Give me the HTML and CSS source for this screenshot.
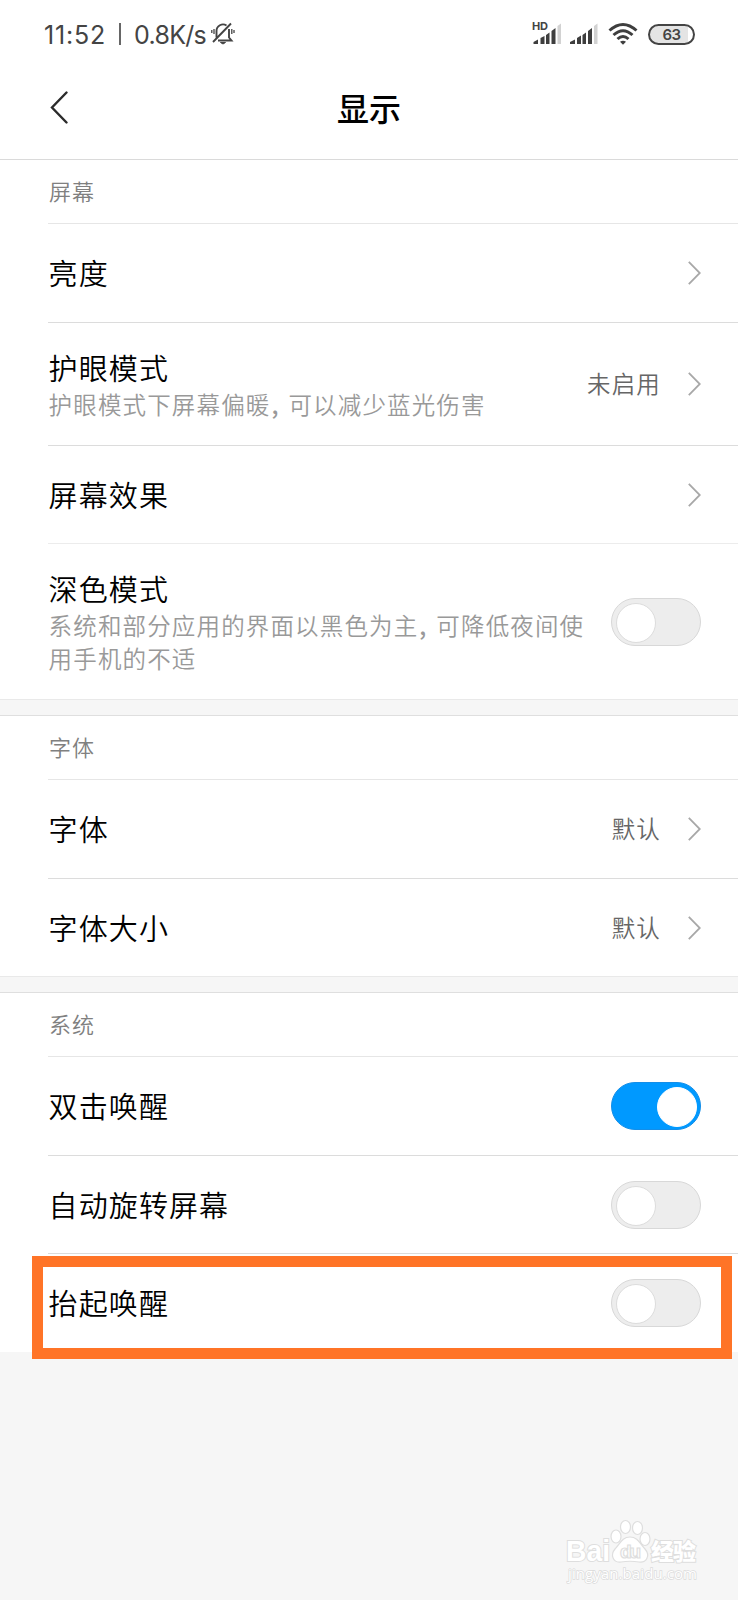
FILE: index.html
```html
<!DOCTYPE html>
<html lang="zh-CN">
<head>
<meta charset="utf-8">
<title>显示</title>
<link rel="stylesheet" href="styles.css">
</head>
<body>
<div class="screen">
  <div class="status">
    <span class="clock">11:52</span><span class="sep"></span><span class="speed">0.8K/s</span>
    <svg class="bell" width="24" height="24" viewBox="0 0 24 24" fill="none" stroke="#444" stroke-width="1.9">
      <path d="M5.500 15.500V9a6.500 6.500 0 0 1 10-5.500M18 7v8.500l2.500 3H7M20 1.500L2 20"/>
      <path d="M9.500 20.500h5l-2.500 1.500z" fill="#444" stroke-width="1"/>
      <path d="M3 7v5M.8 8v3M20.800 7v5M23 8v3" stroke-width="1.300"/>
    </svg>
    <div class="indicators">
      <svg class="signal-hd" width="30" height="28" viewBox="0 -4 30 28">
        <text class="hd" x="0" y="8" textLength="16">HD</text>
        <g fill="#3e3e3e"><path d="M1.500 22v-2l4.500-2.500V22zM8.500 22v-6l4-2v8zM14 22v-9l3.500-2.500V22zM19.500 22V9l4-3v16z"/></g>
        <path d="M25.500 22V4l3.500-2.500V22z" fill="#d2d2d2"/>
      </svg>
      <svg class="signal" width="28" height="24" viewBox="0 0 28 24">
        <g fill="#3e3e3e"><path d="M0 22v-2l5-2.500V22zM7 22v-6l4-2.500V22zM12.500 22v-9l3.500-2.500V22zM18 22V9l4-3v16z"/></g>
        <path d="M24 22V4l3.500-2.500V22z" fill="#d2d2d2"/>
      </svg>
      <svg class="wifi" width="30" height="24" viewBox="0 0 30 24" fill="none" stroke="#3e3e3e" stroke-width="3">
        <path d="M1.500 8.500q13.500-12 27 0M5.500 13q9.500-8.500 19 0M9.500 17q5.500-5 11 0"/>
        <path d="M12 19.800q3-2.300 6 0l-3 3z" fill="#3e3e3e" stroke="none"/>
      </svg>
      <span class="battery">63</span>
    </div>
  </div>
  <header class="header">
    <svg width="18" height="34" viewBox="0 0 18 34" fill="none" stroke="#2b2b2b" stroke-width="2.400" stroke-linecap="round"><path d="M16.500 1.500L2 16.500 16.500 31.500"/></svg>
    <h1>显示</h1>
  </header>

  <section>
    <h2>屏幕</h2>
    <div class="row h99"><div class="title">亮度</div><svg class="chev" viewBox="0 0 13 24"><path d="M.8.8L11.800 12 .8 23.200"/></svg></div>
    <div class="row h123"><div class="text"><div class="title">护眼模式</div><div class="desc">护眼模式下屏幕偏暖<span class="comma">,</span>可以减少蓝光伤害</div></div><span class="value">未启用</span><svg class="chev" viewBox="0 0 13 24"><path d="M.8.8L11.800 12 .8 23.200"/></svg></div>
    <div class="row h98 faint"><div class="title">屏幕效果</div><svg class="chev" viewBox="0 0 13 24"><path d="M.8.8L11.800 12 .8 23.200"/></svg></div>
    <div class="row h155 last"><div class="text"><div class="title">深色模式</div><div class="desc">系统和部分应用的界面以黑色为主<span class="comma">,</span>可降低夜间使<br>用手机的不适</div></div><span class="toggle"></span></div>
  </section>
  <div class="gap"></div>
  <section>
    <h2>字体</h2>
    <div class="row h99"><div class="title">字体</div><span class="value">默认</span><svg class="chev" viewBox="0 0 13 24"><path d="M.8.8L11.800 12 .8 23.200"/></svg></div>
    <div class="row h97 last"><div class="title">字体大小</div><span class="value">默认</span><svg class="chev" viewBox="0 0 13 24"><path d="M.8.8L11.800 12 .8 23.200"/></svg></div>
  </section>
  <div class="gap"></div>
  <section>
    <h2>系统</h2>
    <div class="row h99"><div class="title">双击唤醒</div><span class="toggle on"></span></div>
    <div class="row h98"><div class="title">自动旋转屏幕</div><span class="toggle"></span></div>
    <div class="row h98 last"><div class="title">抬起唤醒</div><span class="toggle"></span></div>
  </section>
  <div class="highlight"></div>
  <svg class="watermark" width="140" height="68" viewBox="0 0 140 68">
    <g fill="#fff" stroke="#dedede" stroke-width="1.200">
      <text class="wm-logo" x="0" y="42" textLength="44" lengthAdjust="spacingAndGlyphs">Bai</text>
      <ellipse cx="50" cy="17.500" rx="5" ry="6.500"/><ellipse cx="59.500" cy="8" rx="5" ry="6.500"/>
      <ellipse cx="71.500" cy="9" rx="5" ry="6.500"/><ellipse cx="79" cy="20" rx="5" ry="6.500"/>
      <path d="M64 18c8 0 10 7 15 12 6 7 1 14-6 13-6-1-12-1-18 0-8 1-11-7-6-13 5-5 7-12 15-12z"/>
      <text class="wm-du" x="54" y="39" textLength="21">du</text>
      <text class="wm-cn" x="85" y="41" textLength="45">经验</text>
    </g>
    <text class="wm-url" x="2" y="60" textLength="129">jingyan.baidu.com</text>
  </svg>
</div>
</body>
</html>
```
FILE: styles.css
```css
* { box-sizing: border-box; }
body {
  margin: 0;
  background: #f6f6f6;
  font-family: "Noto Sans CJK SC", "Noto Sans", sans-serif;
  font-weight: 350;
}
.screen { position: relative; width: 738px; height: 1600px; overflow: hidden; background: #f6f6f6; }
.status {
  display: flex;
  align-items: center;
  height: 68px;
  padding: 0 43px 0 44px;
  background: #fff;
  color: #444;
  font: 400 25px/68px Inter, sans-serif;
}
.clock { width: 62px; padding-top: 1px; letter-spacing: .8px; }
.sep { width: 2px; height: 22px; margin: 0 13px 0 13px; background: #666; }
.speed { width: 73px; padding-top: 1px; letter-spacing: -.7px; white-space: nowrap; }
.bell { margin-left: 4px; }
.indicators { display: flex; align-items: center; margin-left: auto; }
.signal-hd { margin-bottom: 4px; }
.hd { font: 700 11px Inter, sans-serif; fill: #444; }
.signal { margin-left: 8px; }
.wifi { margin-left: 10px; }
.battery {
  width: 47px;
  height: 21px;
  margin-left: 10px;
  border: 2px solid #444;
  border-radius: 11px;
  background: linear-gradient(90deg, #e4e4e4 88%, #fff 88%);
  font: 600 15px/17px Inter, sans-serif;
  text-align: center;
  letter-spacing: -.5px;
}
.header {
  display: grid;
  grid-template-columns: 18px 1fr 18px;
  align-items: center;
  height: 92px;
  padding: 0 50px 12px 50px;
  background: #fff;
  border-bottom: 1px solid #dadada;
}
h1 { margin: 0; padding-bottom: 2px; font-size: 32px; font-weight: 500; line-height: 46px; text-align: center; color: #000; }
section { background: #fff; }
h2 {
  height: 64px;
  margin: 0 0 0 48px;
  padding-left: 1px;
  border-bottom: 1px solid #e6e6e6;
  color: #808080;
  font-size: 22px;
  font-weight: 350;
  line-height: 61px;
  letter-spacing: 1px;
}
.row {
  display: flex;
  align-items: center;
  margin-left: 48px;
  padding-right: 37px;
  padding-left: .6px;
  border-bottom: 1px solid #dcdcdc;
}
.row.faint { border-bottom-color: #ececec; }
.row.last { border-bottom: 0; }
.h97 { height: 97px; }
.h98 { height: 98px; }
.h99 { height: 99px; }
.h123 { height: 123px; }
.h155 { height: 155px; }
.title { padding-bottom: 2px; color: #000; font-size: 29px; line-height: 38px; letter-spacing: 1.100px; white-space: nowrap; }
.desc { color: #999; font-size: 23.500px; line-height: 33px; letter-spacing: 1.150px; white-space: nowrap; }
.comma { display: inline-block; width: 18px; padding-left: 1px; font-weight: 500; }
.value { margin-left: auto; padding-bottom: 2px; color: #666; font-size: 23.500px; letter-spacing: 1.150px; }
.chev { width: 13px; height: 24px; margin-left: 27px; fill: none; stroke: #a8a8a8; stroke-width: 1.800; }
.title + .chev { margin-left: auto; }
.toggle {
  width: 90px;
  height: 48px;
  margin-left: auto;
  padding: 4px;
  border: 1px solid #d8d8d8;
  border-radius: 24px;
  background: #ededed;
}
.toggle::before {
  content: "";
  display: block;
  width: 38px;
  height: 38px;
  border: 1px solid #dcdcdc;
  border-radius: 50%;
  background: #fff;
}
.toggle.on { padding-right: 3px; border-color: #148ee8; background: #0099ff; }
.toggle.on::before { margin-left: auto; border-color: #fff; }
.gap { height: 17px; border-top: 1px solid #e9e9e9; border-bottom: 1px solid #dfdfdf; background: #f6f6f6; }
.highlight { position: absolute; left: 32px; top: 1256px; width: 700px; height: 103px; border: 11px solid #ff7427; }
.watermark { position: absolute; left: 566px; top: 1519px; }
.wm-logo { font: 700 29px "Liberation Sans", sans-serif; paint-order: stroke; stroke-width: 2; }
.wm-du { font: 700 19px "Liberation Sans", sans-serif; }
.wm-cn { font: 900 23px "Noto Sans CJK SC", sans-serif; paint-order: stroke; stroke-width: 2; }
.wm-url { font: 400 15px "Open Sans", sans-serif; fill: #fff; stroke: #dbdbdb; stroke-width: 1.400; paint-order: stroke; }
```
